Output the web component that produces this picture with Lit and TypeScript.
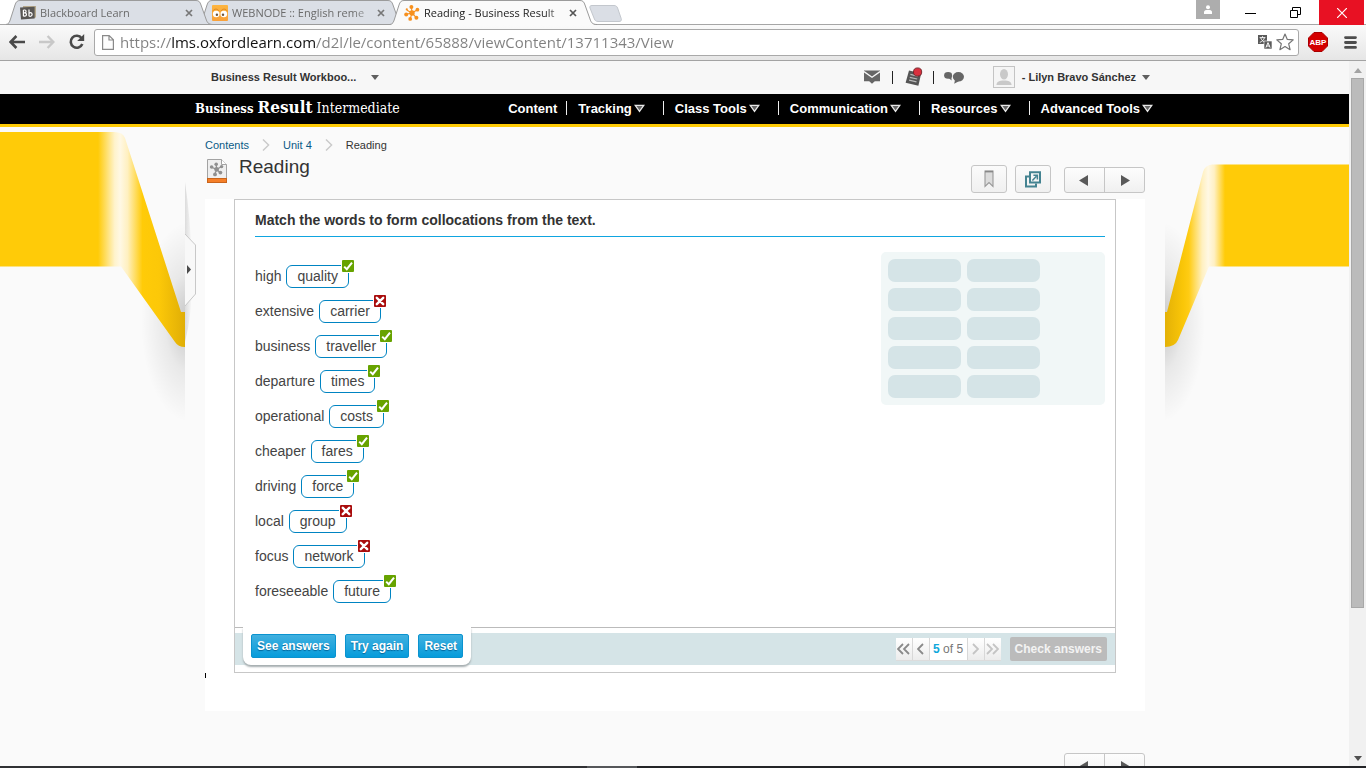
import { LitElement, html, css, svg, nothing } from "lit";
import { customElement, property } from "lit/decorators.js";

/* ---------- icons ---------- */

const blackboardIcon = html`<svg width="16" height="14" viewBox="0 0 16 14" aria-hidden="true">
  <path d="M3 0h13v11l-1 1H3z" fill="#b5a88c" />
  <path d="M0 1.6l14.6-.8V12.6L1 13.6z" fill="#585654" />
  <path d="M3.4 4v6.200M3.400 4h1.400c1.700 0 1.700 2.800 0 2.800H3.500M4.800 6.900c2.200 0 2.200 3.300 0 3.300H3.400M9 3.600v6.600M9.100 7.300c2.300-1.500 3.500.4 2.800 2-.5 1.100-1.900 1.300-2.800.7" fill="none" stroke="#fff" stroke-width="1.2" />
</svg>`;

const webnodeIcon = html`<svg width="16" height="16" viewBox="0 0 16 16" aria-hidden="true">
  <defs><linearGradient id="wn" x2="0" y2="1"><stop offset="0" stop-color="#fdb540" /><stop offset="1" stop-color="#f9a13a" /></linearGradient></defs>
  <rect width="16" height="16" rx="1" fill="url(#wn)" />
  <path d="M.8 6.400C1.600 3.400 6 3.400 7 6.200M9 6.200C10 3.400 14.400 3.400 15.200 6.400" stroke="#e08a20" fill="none" />
  <circle cx="4.200" cy="9" r="3.300" fill="#fff" /><circle cx="11.800" cy="9" r="3.300" fill="#fff" />
  <circle cx="4.900" cy="9.800" r="1.200" fill="#6a5540" /><circle cx="11" cy="9.800" r="1.200" fill="#6a5540" />
</svg>`;

const molecule = (color: string, size: number) => html`<svg width=${size} height=${size} viewBox="0 0 16 16" aria-hidden="true">
  <path d="M8 8L7.4 2M8 8l5.3-3.2M8 8l4.3 4.6M8 8l-1.7 5.6M8 8L2 9.2M8 8L3 5.2" stroke=${color} stroke-width="1.1" />
  <g fill=${color}><circle cx="8" cy="8" r="2.7" /><circle cx="7.4" cy="2.1" r="2" /><circle cx="13.4" cy="4.7" r="1.9" />
  <circle cx="12.4" cy="12.7" r="2" /><circle cx="6.2" cy="13.9" r="1.9" /><circle cx="2.2" cy="9.4" r="2" /><circle cx="2.8" cy="4.4" r="1.1" /></g>
</svg>`;

const closeIcon = (color: string) => html`<svg width="8" height="8" viewBox="0 0 8 8" aria-hidden="true">
  <path d="M1 1l6 6M7 1L1 7" stroke=${color} stroke-width="1.7" /></svg>`;

const backIcon = html`<svg width="16" height="14" viewBox="0 0 16 14" aria-hidden="true">
  <path d="M7.4 1L1.6 7l5.8 6M2 7h14" fill="none" stroke="#4a4a4a" stroke-width="2.6" /></svg>`;
const forwardIcon = html`<svg width="16" height="14" viewBox="0 0 16 14" aria-hidden="true">
  <path d="M8.6 1l5.8 6-5.8 6M14 7H0" fill="none" stroke="#c8c8c8" stroke-width="2.4" /></svg>`;
const reloadIcon = html`<svg width="16" height="16" viewBox="0 0 16 16" aria-hidden="true">
  <path d="M12.6 4.2A6 6 0 1 0 13.3 10" fill="none" stroke="#4a4a4a" stroke-width="2.6" />
  <path d="M15.2 0v7H8.2z" fill="#4a4a4a" /></svg>`;
const fileIcon = html`<svg width="12" height="15" viewBox="0 0 12 15" aria-hidden="true">
  <path d="M.6.6h6.6l4.2 4.2v9.6H.6zM7 .8V5h4.2" fill="#fdfdfd" stroke="#8a8a8a" stroke-width="1.2" /></svg>`;
const translateIcon = html`<svg width="14" height="14" viewBox="0 0 14 14" aria-hidden="true">
  <rect width="9" height="9" fill="#5a5a5a" />
  <path d="M1.6 2.6h5.8M4.5 1.2v1.4M6.4 2.8C5.8 5 4 6.6 1.8 7.4M2.8 3C3.4 5 5 6.6 7.2 7.2" stroke="#fff" fill="none" stroke-width=".9" />
  <rect x="6" y="6" width="8" height="8" fill="#5a5a5a" stroke="#fff" stroke-width=".6" />
  <path d="M7.9 12.6L10 7.6l2.1 5M8.6 11h2.8" stroke="#fff" fill="none" stroke-width="1" /></svg>`;
const starIcon = html`<svg width="18" height="18" viewBox="0 0 18 18" aria-hidden="true">
  <path d="M9 1l2.3 5.4 5.9.5-4.5 3.9 1.4 5.9L9 13.5l-5.1 3.2 1.4-5.9L.8 6.9l5.9-.5z" fill="#fff" stroke="#757575" stroke-width="1.2" stroke-linejoin="round" /></svg>`;
const menuIcon = html`<svg width="13" height="13" viewBox="0 0 13 13" aria-hidden="true">
  <path d="M1.5 1.6h10M1.5 6.5h10M1.5 11.4h10" stroke="#4d4d4d" stroke-width="2.8" stroke-linecap="round" /></svg>`;

const mailIcon = html`<svg width="16" height="14" viewBox="0 0 16 14" aria-hidden="true">
  <path d="M0 .4h16v10.8h-5.2L8 13.8l-2.8-2.6H0z" fill="#666" />
  <path d="M0 1.6l8 5.6 8-5.6" fill="none" stroke="#f7f7f7" stroke-width="1.3" /></svg>`;
const noteIcon = html`<svg width="18" height="20" viewBox="0 0 18 20" aria-hidden="true">
  <path d="M4 3.4l12.2 2.8-2.8 12.6L.6 15.8z" fill="#555" />
  <path d="M5.4 7.4l7.4 1.7M4.8 10.3l7.4 1.7M4.1 13.1l7.4 1.7" stroke="#bbb" stroke-width="1.2" />
  <circle cx="12.6" cy="5" r="4.1" fill="#d9303e" stroke="#6d2228" stroke-width=".9" /></svg>`;
const chatIcon = html`<svg width="20" height="13" viewBox="0 0 20 13" aria-hidden="true">
  <ellipse cx="4.1" cy="4.4" rx="4" ry="3.3" fill="#666" /><path d="M4.6 7l3 2.6-.2-4z" fill="#666" />
  <ellipse cx="14.4" cy="5.8" rx="5.6" ry="4.8" fill="#666" /><path d="M11 9l-.8 3.8 4.6-2.6z" fill="#666" /></svg>`;
const avatarIcon = html`<svg width="22" height="22" viewBox="0 0 22 22" aria-hidden="true">
  <rect x=".5" y=".5" width="21" height="21" fill="#f5f5f5" stroke="#c4c4c4" />
  <ellipse cx="11" cy="8.2" rx="4" ry="5.2" fill="#c9c9c9" /><path d="M3.4 19c.4-3.4 3-4.4 7.6-4.4s7.2 1 7.6 4.4z" fill="#c9c9c9" /></svg>`;
const caret = html`<svg width="8" height="5" viewBox="0 0 8 5" aria-hidden="true"><path d="M0 0h8L4 5z" fill="#5f5f5f" /></svg>`;
const navCaret = html`<svg width="11" height="9" viewBox="0 0 11 9" aria-hidden="true">
  <path d="M1.2 1.4h8.6L5.5 7.4z" fill="#666" stroke="#e8e8e8" stroke-width="1.3" /></svg>`;
const chevron = html`<svg width="8" height="12" viewBox="0 0 8 12" aria-hidden="true">
  <path d="M1 .6L6.6 6 1 11.4" fill="none" stroke="#c9c9c9" stroke-width="1.4" /></svg>`;
const topicIcon = html`<svg width="20" height="24" viewBox="0 0 20 24" aria-hidden="true">
  <path d="M.5.5h14l5 5v14H.5z" fill="#efefef" stroke="#a3a3a3" /><path d="M14.5.5v5h5" fill="#fff" stroke="#a3a3a3" />
  <path d="M9.6 10.4L9.2 5.2M9.6 10.4l5-3M9.6 10.4l3.6 3.4M9.6 10.4L8 15M9.6 10.4L4.6 8.2" stroke="#8f8f8f" stroke-width="1.2" />
  <g fill="#8f8f8f"><circle cx="9.6" cy="10.4" r="2.3" /><circle cx="9.2" cy="5.2" r="1.8" /><circle cx="14.6" cy="7.6" r="1.7" /><circle cx="13.4" cy="13.6" r="1.9" /><circle cx="8" cy="15.4" r="1.9" /><circle cx="4.6" cy="8" r="1.8" /></g>
  <rect x=".5" y="19.5" width="19" height="4" fill="#f57f28" stroke="#c9641b" /></svg>`;
const bookmarkIcon = html`<svg width="10" height="18" viewBox="0 0 10 18" aria-hidden="true">
  <path d="M1 1h8v15.4L5 12.6 1 16.4z" fill="#dcdcdc" stroke="#999" stroke-width="1.1" /><path d="M1 1.6h8" stroke="#888" stroke-width="1.6" /></svg>`;
const popoutIcon = html`<svg width="16" height="17" viewBox="0 0 16 17" aria-hidden="true">
  <path d="M4 5.5H1v10h10v-3" fill="none" stroke="#448391" stroke-width="2" />
  <path d="M5 1.2h10v10.4H5z" fill="none" stroke="#448391" stroke-width="2" />
  <path d="M7.4 9.4l4-4.2M8.4 4.2h4v4.2" fill="none" stroke="#448391" stroke-width="1.5" /></svg>`;
const arrow = (right: boolean) => html`<svg width="9" height="11" viewBox="0 0 9 11" aria-hidden="true">
  <path d=${right ? "M0 0l9 5.5L0 11z" : "M9 0L0 5.5 9 11z"} fill="#595959" /></svg>`;
const tick = html`<svg width="12" height="12" viewBox="0 0 12 12" aria-hidden="true">
  <rect width="12" height="12" rx="1" fill="#67a300" /><path d="M2.2 6.6l2.6 2.6 5.2-6.6" fill="none" stroke="#fff" stroke-width="2" /></svg>`;
const cross = html`<svg width="12" height="12" viewBox="0 0 12 12" aria-hidden="true">
  <rect width="12" height="12" rx="1" fill="#a90d0d" /><path d="M2.8 2.8l6.4 6.4M9.2 2.8L2.8 9.2" fill="none" stroke="#fff" stroke-width="2.4" stroke-linecap="round" /></svg>`;
const step = (double: boolean, right: boolean, color: string) => {
  const one = right ? "M1 1l5 5-5 5" : "M6 1L1 6l5 5";
  return html`<svg width=${double ? 13 : 7} height="12" viewBox=${double ? "0 0 13 12" : "0 0 7 12"} aria-hidden="true">
    <path d=${one} fill="none" stroke=${color} stroke-width="1.8" />
    ${double ? svg`<path d=${one} transform="translate(6 0)" fill="none" stroke=${color} stroke-width="1.8" />` : nothing}</svg>`;
};

/* ---------- browser frame ---------- */

@customElement("browser-tab")
class BrowserTab extends LitElement {
  @property() label = "";
  @property({ type: Boolean, reflect: true }) active = false;

  static styles = css`
    :host { position: relative; display: flex; align-items: center; width: 207px; height: 25px; margin-right: -15px; z-index: 2; box-sizing: border-box; padding: 0 14px; }
    :host(:nth-of-type(2)) { z-index: 1; }
    :host([active]) { z-index: 3; }
    .shape { position: absolute; inset: 0; z-index: -1; }
    .icon { display: flex; width: 16px; margin-right: 4px; }
    .label { flex: 1; overflow: hidden; white-space: nowrap; font: 11px/18px "Open Sans", "Noto Sans", sans-serif; color: #6b6b6b; -webkit-mask-image: linear-gradient(90deg, #000 86%, transparent); mask-image: linear-gradient(90deg, #000 86%, transparent 106%); }
    :host([active]) .label { color: #222; }
    .close { display: flex; justify-content: center; align-items: center; width: 16px; height: 16px; margin: 1px 2px 0 1px; padding: 0; border: 0; background: none; }
  `;

  render() {
    return html`
      <svg class="shape" width="207" height="25" viewBox="0 0 207 25" aria-hidden="true">
        <path d="M0 25C3 24 3.500 22 4.500 19L9 5C10 2 11 .5 14 .5H190C193 .5 194 2 195 5l5 14c1 3 2 5.500 7 6z" fill=${this.active ? "#fafafa" : "#dbdfe6"} />
        <path d="M0 24.500C3 24 3.500 22 4.500 19L9 5C10 2 11 .5 14 .5H190C193 .5 194 2 195 5l5 14c1 3 2 5.500 7 5.500${this.active ? "" : "H0"}" fill="none" stroke="#9b9b9b" />
      </svg>
      <span class="icon"><slot></slot></span>
      <span class="label">${this.label}</span>
      <button class="close" aria-label="Close tab">${closeIcon(this.active ? "#555" : "#777")}</button>
    `;
  }
}

@customElement("browser-frame")
class BrowserFrame extends LitElement {
  static styles = css`
    :host { display: block; flex: none; }
    button { border: 0; padding: 0; background: none; display: flex; align-items: center; justify-content: center; }
    .strip { display: flex; height: 24px; padding-left: 6px; background: #fff; border-bottom: 1px solid #a6a6a6; }
    .new { margin: 5px 0 0 7px; height: 17px; }
    .window { display: flex; margin-left: auto; align-items: flex-start; }
    .user { width: 24px; height: 19px; margin-right: 8px; background: #adadad; }
    .ctl { width: 45px; height: 25px; }
    .quit { width: 45px; height: 25px; margin: 0 2px 0 1px; background: #e81123; }
    .bar { display: flex; align-items: center; height: 36px; box-sizing: border-box; padding: 0 9px 1px; background: linear-gradient(#fafafa, #e6e6e6); border-bottom: 1px solid #a3a3a3; }
    .bar > button { width: 16px; margin-right: 14px; }
    .bar > .reload { margin-right: 9px; }
    .address { flex: 1; display: flex; align-items: center; height: 27px; box-sizing: border-box; border: 1px solid #a9a9a9; border-radius: 3px; background: #fff; padding: 0 4px 0 7px; }
    .address input { flex: 1; min-width: 0; height: 24px; margin: 0 0 0 6px; padding: 0; border: 0; outline: 0; font: 15px/24px "Open Sans", "Noto Sans", sans-serif; color: transparent; background: linear-gradient(90deg, #808080 52px, #111 52px 195px, #808080 195px); -webkit-background-clip: text; background-clip: text; }
    .address button { margin-left: 4px; }
    .bar > .abp { width: 20px; margin: 0 16px 0 9px; }
    .bar > .menu { width: 13px; margin: 0; }
    .abp text { font: bold 8px "Liberation Sans", Arial, sans-serif; fill: #fff; }
  `;

  render() {
    return html`
      <div class="strip">
        <browser-tab label="Blackboard Learn">${blackboardIcon}</browser-tab>
        <browser-tab label="WEBNODE :: English reme">${webnodeIcon}</browser-tab>
        <browser-tab label="Reading - Business Result" active>${molecule("#f7901e", 16)}</browser-tab>
        <button class="new" aria-label="New tab"><svg width="33" height="17" viewBox="0 0 33 17" aria-hidden="true">
          <path d="M3 .5h22c2 0 3 1 3.600 2.500l3.600 10.500c.6 2-.2 3-2.200 3H9c-2 0-3-1-3.600-2.500L1 3C.5 1.500 1 .5 3 .5z" fill="#dadee5" stroke="#c3c7cd" /></svg></button>
        <div class="window">
          <button class="user" aria-label="Profile"><svg width="10" height="10" viewBox="0 0 10 10" aria-hidden="true"><circle cx="5" cy="2.300" r="2" fill="#fff" /><path d="M1 9V6.800C1 5.400 3 5 5 5s4 .4 4 1.800V9z" fill="#fff" /></svg></button>
          <button class="ctl" aria-label="Minimize"><svg width="11" height="11" viewBox="0 0 11 11" aria-hidden="true"><path d="M0 6.500h11" stroke="#000" /></svg></button>
          <button class="ctl" aria-label="Restore"><svg width="11" height="11" viewBox="0 0 11 11" aria-hidden="true"><path d="M.5 3.500h7v7h-7zM2.500 3V.5h8v7H8" fill="none" stroke="#000" /></svg></button>
          <button class="quit" aria-label="Close"><svg width="10" height="10" viewBox="0 0 10 10" aria-hidden="true"><path d="M0 0l10 10M10 0L0 10" stroke="#fff" stroke-width="1.200" /></svg></button>
        </div>
      </div>
      <div class="bar">
        <button aria-label="Back">${backIcon}</button>
        <button aria-label="Forward">${forwardIcon}</button>
        <button class="reload" aria-label="Reload">${reloadIcon}</button>
        <div class="address">
          ${fileIcon}
          <input aria-label="Address" value="https://lms.oxfordlearn.com/d2l/le/content/65888/viewContent/13711343/View" />
          <button aria-label="Translate">${translateIcon}</button>
          <button aria-label="Bookmark page">${starIcon}</button>
        </div>
        <button class="abp" aria-label="Adblock Plus"><svg width="20" height="20" viewBox="0 0 20 20" aria-hidden="true"><path d="M6 .5h8L19.500 6v8L14 19.500H6L.5 14V6z" fill="#d40000" stroke="#a80000" /><text x="10" y="13" text-anchor="middle">ABP</text></svg></button>
        <button class="menu" aria-label="Menu">${menuIcon}</button>
      </div>
    `;
  }
}

/* ---------- course header ---------- */

@customElement("course-header")
class CourseHeader extends LitElement {
  private links = ["Content", "Tracking", "Class Tools", "Communication", "Resources", "Advanced Tools"];

  static styles = css`
    :host { display: block; font-family: "Liberation Sans", Arial, sans-serif; }
    button { display: flex; align-items: center; border: 0; padding: 0; background: none; font: inherit; color: inherit; }
    .wrap { display: flex; align-items: center; width: 980px; margin: 0 auto; box-sizing: border-box; height: 100%; }
    .mini { height: 33px; background: #f7f7f7; color: #333; font-size: 11px; font-weight: bold; padding-left: 1px; }
    .mini .wrap { padding: 0 15px 1px 26px; }
    .course { gap: 15px; }
    .tools { display: flex; align-items: center; margin-left: auto; }
    .sep { width: 1px; height: 13px; background: #222; }
    .mail { margin-right: 12px; }
    .note { margin: 0 10px 0 12px; }
    .chat { margin: 0 29px 0 10px; }
    .user { gap: 6px; }
    .user svg:first-child { margin-right: 1px; }
    .nav { height: 30px; background: #000; border-bottom: 3px solid #ffcb05; color: #fff; padding-left: 1px; }
    .nav .wrap { padding: 0 12px 2px 10px; }
    .logo { display: flex; align-items: baseline; gap: 4px; font: 14px/24px "DejaVu Serif Condensed", "DejaVu Serif", serif; color: #fff; text-decoration: none; white-space: nowrap; }
    .logo b { font-size: 13px; }
    .logo strong { font-size: 17px; }
    nav { margin-left: auto; display: flex; align-items: center; font-size: 13px; font-weight: bold; }
    nav button { gap: 2px; margin-right: 18px; white-space: nowrap; }
    nav button:first-child { margin-right: 9px; }
    nav button:last-child { margin-right: 0; }
    nav .line { width: 1px; height: 14px; margin-right: 11px; background: #eee; }
  `;

  render() {
    return html`
      <div class="mini"><div class="wrap">
        <button class="course">Business Result Workboo... ${caret}</button>
        <div class="tools">
          <button class="mail" aria-label="Messages">${mailIcon}</button><span class="sep"></span>
          <button class="note" aria-label="Updates">${noteIcon}</button><span class="sep"></span>
          <button class="chat" aria-label="Discussions">${chatIcon}</button>
          <button class="user">${avatarIcon}<span>- Lilyn Bravo Sánchez</span>${caret}</button>
        </div>
      </div></div>
      <div class="nav"><div class="wrap">
        <a class="logo" href="#"><b>Business</b><strong>Result</strong><span>Intermediate</span></a>
        <nav>${this.links.map((l, i) => html`${i ? html`<span class="line"></span>` : nothing}<button>${l}${i ? navCaret : nothing}</button>`)}</nav>
      </div></div>
    `;
  }
}

/* ---------- exercise ---------- */

interface Pair { prompt: string; answer: string; ok: boolean }

@customElement("match-exercise")
class MatchExercise extends LitElement {
  private pairs: Pair[] = [
    { prompt: "high", answer: "quality", ok: true },
    { prompt: "extensive", answer: "carrier", ok: false },
    { prompt: "business", answer: "traveller", ok: true },
    { prompt: "departure", answer: "times", ok: true },
    { prompt: "operational", answer: "costs", ok: true },
    { prompt: "cheaper", answer: "fares", ok: true },
    { prompt: "driving", answer: "force", ok: true },
    { prompt: "local", answer: "group", ok: false },
    { prompt: "focus", answer: "network", ok: false },
    { prompt: "foreseeable", answer: "future", ok: true },
  ];

  static styles = css`
    :host { display: block; border: 1px solid #c7c7c7; background: #fff; font-family: "Liberation Sans", Arial, sans-serif; }
    h2 { margin: 0 10px 0 20px; padding: 11px 0 7px; font-size: 14px; line-height: 18px; color: #333; border-bottom: 1px solid #0fa5e0; }
    .work { display: flex; justify-content: space-between; align-items: flex-start; margin: 15px 10px 0 20px; }
    .pairs { list-style: none; margin: 0; padding: 7px 0 18px; }
    .pairs li { display: flex; align-items: center; gap: 5px; height: 35px; font-size: 14px; line-height: 21px; color: #444; }
    .chip { position: relative; padding: 0 10px; border: 1px solid #0084c2; border-radius: 6px; }
    .mark { position: absolute; top: -7px; right: -7px; display: flex; border: 1px solid #fff; }
    .bank { display: grid; grid-template-columns: 73px 73px; gap: 6px; width: 210px; padding: 7px; margin: 0; list-style: none; border-radius: 5px; background: #f1f7f7; }
    .bank li { height: 23px; border-radius: 7px; background: #d5e4e7; }
    .foot { border-top: 1px solid #bbb; padding: 5px 0 7px; }
    .band { display: flex; justify-content: space-between; align-items: center; height: 32px; padding: 0 8px; background: #d5e4e7; }
    .tray { display: flex; gap: 9px; margin-top: -6px; padding: 7px 8px; border-radius: 0 0 8px 8px; background: #fff; box-shadow: 0 2px 2px #a5adaf; }
    button { font: bold 12px/22px "Liberation Sans", Arial, sans-serif; margin: 0; }
    .act { height: 24px; padding: 0 5px; border: 1px solid #0b93cf; border-radius: 2px; color: #fff; background: linear-gradient(#41b0df, #069cdb); text-shadow: 0 1px 1px #00659a; }
    .right { display: flex; align-items: center; gap: 9px; }
    .pager { display: flex; height: 22px; gap: 1px; padding: 0; background: #d8d8d8; border: solid #dcdcdc; border-width: 0 0 1px; font-size: 12px; line-height: 22px; color: #777; }
    .pager button { display: flex; align-items: center; justify-content: center; width: 16px; padding: 0; border: 0; background: linear-gradient(#fff, #ececec); }
    .pager span { width: 37px; text-align: center; background: #fff; }
    .pager b { color: #0fa8dc; }
    .check { height: 24px; padding: 0 5px; border: 0; border-radius: 2px; background: #bbb; color: #f3f3f3; }
  `;

  render() {
    return html`
      <h2>Match the words to form collocations from the text.</h2>
      <div class="work">
        <ul class="pairs">${this.pairs.map((p) => html`<li>${p.prompt}<span class="chip">${p.answer}<span class="mark" role="img" aria-label=${p.ok ? "Correct" : "Incorrect"}>${p.ok ? tick : cross}</span></span></li>`)}</ul>
        <ul class="bank" aria-label="Word bank">${this.pairs.map(() => html`<li></li>`)}</ul>
      </div>
      <div class="foot"><div class="band">
        <div class="tray">
          <button class="act">See answers</button><button class="act">Try again</button><button class="act">Reset</button>
        </div>
        <div class="right">
          <div class="pager">
            <button aria-label="First">${step(true, false, "#8a8a8a")}</button>
            <button aria-label="Previous">${step(false, false, "#8a8a8a")}</button>
            <span><b>5</b> of 5</span>
            <button aria-label="Next" disabled>${step(false, true, "#c4c4c4")}</button>
            <button aria-label="Last" disabled>${step(true, true, "#c4c4c4")}</button>
          </div>
          <button class="check" disabled>Check answers</button>
        </div>
      </div></div>
    `;
  }
}

/* ---------- page ---------- */

@customElement("app-root")
class AppRoot extends LitElement {
  static styles = css`
    :host { display: flex; flex-direction: column; height: 100vh; overflow: hidden; background: #fafafa; font-family: "Liberation Sans", Arial, sans-serif; }
    .view { flex: 1; min-height: 0; display: flex; }
    .page { flex: 1; min-width: 0; overflow: hidden; }
    .main { display: grid; grid-template-columns: minmax(0, 1fr) 980px minmax(0, 1fr); padding-left: 1px; }
    .art { overflow: visible; display: block; }
    .art.left { justify-self: end; }
    .column { position: relative; z-index: 1; background: #fafafa; padding: 0 20px; min-width: 0; }
    .fold { position: absolute; left: 0; top: 50px; }
    .crumbs { display: flex; align-items: center; gap: 13px; padding-top: 11px; font-size: 11px; line-height: 14px; color: #333; }
    .crumbs a { color: #0a5a86; text-decoration: none; }
    .head { display: flex; justify-content: space-between; height: 47px; }
    .title { display: flex; align-items: flex-start; gap: 12px; padding: 7px 0 0 2px; }
    h1 { margin: -3px 0 0; font-size: 19px; line-height: 22px; font-weight: normal; color: #333; }
    .actions { display: flex; align-items: flex-end; gap: 8px; padding-bottom: 6px; }
    button { padding: 0; display: flex; align-items: center; justify-content: center; }
    .sq { width: 36px; height: 28px; border: 1px solid #c6c6c6; border-radius: 3px; background: linear-gradient(#fbfbfb, #f0f0f0); }
    .pair { display: flex; margin-left: 5px; border: 1px solid #c6c6c6; border-radius: 3px; background: linear-gradient(#fdfdfd, #f0f0f0); }
    .pair button { width: 39px; height: 24px; padding-right: 2px; border: 0; background: none; }
    .pair button + button { width: 40px; padding: 0 0 0 2px; border-left: 1px solid #c6c6c6; }
    .sheet { background: #fff; padding: 0 29px 38px; }
    .below { display: flex; justify-content: flex-end; padding-top: 42px; }
    .caretmark { position: absolute; left: 20px; top: 546px; width: 1px; height: 5px; background: #000; }
    .scroll { flex: none; width: 17px; display: flex; flex-direction: column; align-items: center; background: #f1f1f1; }
    .scroll svg { margin: 7px 0 5px; flex: none; }
    .track { flex: 1; width: 13px; }
    .thumb { height: 79%; box-sizing: border-box; border: 1px solid #a8a8a8; background: #bbb; }
    .task { flex: none; height: 2px; background: linear-gradient(90deg, #303134 43%, #55575a 43% 46.600%, #232427 46.600%); }
  `;

  private nav() {
    return html`<div class="pair"><button aria-label="Previous">${arrow(false)}</button><button aria-label="Next">${arrow(true)}</button></div>`;
  }

  render() {
    return html`
      <browser-frame></browser-frame>
      <div class="view">
        <div class="page">
          <course-header></course-header>
          <div class="main">
            <svg class="art left" width="185" height="320" viewBox="0 127 185 320" aria-hidden="true">
              <defs>
                <linearGradient id="gl" gradientUnits="userSpaceOnUse" x1="0" x2="185" y1="0" y2="0">
                  <stop offset=".53" stop-color="#ffcb08" /><stop offset=".62" stop-color="#fff3cc" /><stop offset=".65" stop-color="#fff8e4" /><stop offset=".69" stop-color="#fff0c0" /><stop offset=".77" stop-color="#ffcb08" /><stop offset=".86" stop-color="#fcc808" /><stop offset="1" stop-color="#e0ae06" />
                </linearGradient>
                <radialGradient id="sl" gradientUnits="userSpaceOnUse" cx="0" cy="0" r="1" gradientTransform="translate(189 322) scale(48 100)">
                  <stop offset="0" stop-color="#000" stop-opacity=".22" /><stop offset=".5" stop-color="#000" stop-opacity=".07" /><stop offset="1" stop-color="#000" stop-opacity="0" />
                </radialGradient>
              </defs>
              <path d="M125 180h60v260h-60z" fill="url(#sl)" />
              <path d="M-1200 132H114Q123 132 125 138L181 312h4v35q-7 0-10-5L121 266.500H-1200z" fill="url(#gl)" />
            </svg>
            <div class="column">
              <svg class="fold" width="12" height="180" viewBox="0 0 12 180" aria-hidden="true">
                <defs><linearGradient id="fd"><stop offset="0" stop-color="#dcdcdc" /><stop offset="1" stop-color="#fafafa" /></linearGradient></defs>
                <path d="M0 5Q6 45 7 90T0 165z" fill="url(#fd)" />
                <path d="M0 57l10.500 11v49L0 129z" fill="#f8f8f8" /><path d="M0 57l10.500 11v49L0 129" fill="none" stroke="#c8c8c8" />
                <path d="M2 88l4 4.500L2 97z" fill="#4a4a4a" />
              </svg>
              <div class="crumbs"><a href="#">Contents</a>${chevron}<a href="#">Unit 4</a>${chevron}<span>Reading</span></div>
              <div class="head">
                <div class="title">${topicIcon}<h1>Reading</h1></div>
                <div class="actions">
                  <button class="sq" aria-label="Bookmark">${bookmarkIcon}</button>
                  <button class="sq" aria-label="Open in new window">${popoutIcon}</button>
                  ${this.nav()}
                </div>
              </div>
              <div class="sheet"><match-exercise></match-exercise></div>
              <span class="caretmark"></span>
              <div class="below">${this.nav()}</div>
            </div>
            <svg class="art right" width="184" height="320" viewBox="1165 127 184 320" aria-hidden="true">
              <defs>
                <linearGradient id="gr" gradientUnits="userSpaceOnUse" x1="1165" x2="1225" y1="0" y2="0">
                  <stop offset="0" stop-color="#e3b106" /><stop offset=".3" stop-color="#fac608" /><stop offset=".4" stop-color="#ffcc14" /><stop offset=".62" stop-color="#fff0c0" /><stop offset=".72" stop-color="#fff8e4" /><stop offset=".82" stop-color="#fff0c4" /><stop offset="1" stop-color="#ffcb08" />
                </linearGradient>
                <radialGradient id="sr" gradientUnits="userSpaceOnUse" cx="0" cy="0" r="1" gradientTransform="translate(1161 322) scale(44 100)">
                  <stop offset="0" stop-color="#000" stop-opacity=".22" /><stop offset=".5" stop-color="#000" stop-opacity=".07" /><stop offset="1" stop-color="#000" stop-opacity="0" />
                </radialGradient>
              </defs>
              <path d="M1165 200h60v240h-60z" fill="url(#sr)" />
              <path d="M2600 164.500H1212Q1205 165 1203 172L1167 312h-2v35q10 0 13-7L1209 266.500H2600z" fill="url(#gr)" />
            </svg>
          </div>
        </div>
        <div class="scroll">
          <svg width="8" height="5" viewBox="0 0 8 5" aria-hidden="true"><path d="M0 5h8L4 0z" fill="#a3a3a3" /></svg>
          <div class="track"><div class="thumb"></div></div>
          <svg width="8" height="5" viewBox="0 0 8 5" aria-hidden="true"><path d="M0 0h8L4 5z" fill="#505050" /></svg>
        </div>
      </div>
      <div class="task"></div>
    `;
  }
}
